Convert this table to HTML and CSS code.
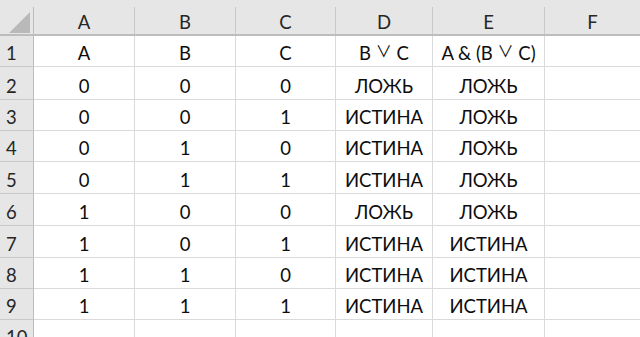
FILE: index.html
```html
<!DOCTYPE html>
<html>
<head>
<meta charset="utf-8">
<link rel="stylesheet" href="styles.css">
</head>
<body>
<div class="sheet">
  <div class="row head">
    <div class="corner"><svg width="34" height="28" viewBox="0 0 34 28"><polygon points="9,26 30,26 30,5" fill="#b9b9b9"/></svg></div>
    <div class="ch ca">A</div><div class="ch cb">B</div><div class="ch cc">C</div><div class="ch cd">D</div><div class="ch ce">E</div><div class="ch cf">F</div>
  </div>
  <div class="row r1"><div class="rh">1</div><div class="c ca">A</div><div class="c cb">B</div><div class="c cc">C</div><div class="c cd"><span class="t">B <span class="or">∨</span> C</span></div><div class="c ce"><span class="t">A &amp; (B <span class="or">∨</span> C)</span></div><div class="c cf"></div></div>
  <div class="row r2"><div class="rh">2</div><div class="c ca">0</div><div class="c cb">0</div><div class="c cc">0</div><div class="c cd">ЛОЖЬ</div><div class="c ce">ЛОЖЬ</div><div class="c cf"></div></div>
  <div class="row r3"><div class="rh">3</div><div class="c ca">0</div><div class="c cb">0</div><div class="c cc">1</div><div class="c cd">ИСТИНА</div><div class="c ce">ЛОЖЬ</div><div class="c cf"></div></div>
  <div class="row r4"><div class="rh">4</div><div class="c ca">0</div><div class="c cb">1</div><div class="c cc">0</div><div class="c cd">ИСТИНА</div><div class="c ce">ЛОЖЬ</div><div class="c cf"></div></div>
  <div class="row r5"><div class="rh">5</div><div class="c ca">0</div><div class="c cb">1</div><div class="c cc">1</div><div class="c cd">ИСТИНА</div><div class="c ce">ЛОЖЬ</div><div class="c cf"></div></div>
  <div class="row r6"><div class="rh">6</div><div class="c ca">1</div><div class="c cb">0</div><div class="c cc">0</div><div class="c cd">ЛОЖЬ</div><div class="c ce">ЛОЖЬ</div><div class="c cf"></div></div>
  <div class="row r7"><div class="rh">7</div><div class="c ca">1</div><div class="c cb">0</div><div class="c cc">1</div><div class="c cd">ИСТИНА</div><div class="c ce">ИСТИНА</div><div class="c cf"></div></div>
  <div class="row r8"><div class="rh">8</div><div class="c ca">1</div><div class="c cb">1</div><div class="c cc">0</div><div class="c cd">ИСТИНА</div><div class="c ce">ИСТИНА</div><div class="c cf"></div></div>
  <div class="row r9"><div class="rh">9</div><div class="c ca">1</div><div class="c cb">1</div><div class="c cc">1</div><div class="c cd">ИСТИНА</div><div class="c ce">ИСТИНА</div><div class="c cf"></div></div>
  <div class="row r10"><div class="rh">10</div><div class="c ca"></div><div class="c cb"></div><div class="c cc"></div><div class="c cd"></div><div class="c ce"></div><div class="c cf"></div></div>
</div>
</body>
</html>
```
FILE: styles.css
```css
html, body {
  margin: 0;
  padding: 0;
  background: #ffffff;
  overflow: hidden;
}
.sheet {
  width: 640px;
  height: 337px;
  overflow: hidden;
  font-family: Lato, "Open Sans", sans-serif;
  font-size: 18.5px;
  color: #0d0d0d;
}
.row {
  display: flex;
  box-sizing: border-box;
}
.head {
  height: 36px;
  padding-top: 7px;
  background: #e6e6e6;
  border-bottom: 2px solid #bdbdbd;
}
.corner {
  width: 34px;
  flex: none;
  box-sizing: border-box;
  border-right: 1px solid #bcbcbc;
  height: 27px;
}
.corner svg { display: block; }
.ch {
  flex: none;
  box-sizing: border-box;
  border-right: 1px solid #c9c9c9;
  display: flex;
  align-items: flex-end;
  justify-content: center;
  padding-bottom: 1px;
  color: #262626;
}
.ca { width: 101px; }
.cb { width: 101px; }
.cc { width: 100px; }
.cd { width: 97px; }
.ce { width: 112px; }
.cf { flex: 1; border-right: none; }
.rh {
  width: 34px;
  flex: none;
  box-sizing: border-box;
  background: #e6e6e6;
  border-right: 1px solid #bcbcbc;
  border-bottom: 1px solid #c9c9c9;
  display: flex;
  align-items: flex-end;
  padding-left: 6px;
  padding-bottom: 2px;
  color: #262626;
}
.c {
  flex: none;
  box-sizing: border-box;
  border-right: 1px solid #dadada;
  border-bottom: 1px solid #dadada;
  display: flex;
  align-items: flex-end;
  justify-content: center;
  padding-bottom: 2px;
  white-space: pre;
  line-height: 22px;
}
.t {
  display: block;
  line-height: 22px;
  height: 22px;
}
.or {
  font-family: "Noto Sans CJK JP", sans-serif;
  font-size: 16px;
  line-height: 1;
  vertical-align: 3px;
}
.c.cf { flex: 1; border-right: none; }
.r1 { height: 31px; }
.r2 { height: 33px; }
.r3 { height: 31px; }
.r4 { height: 31px; }
.r5 { height: 32px; }
.r6 { height: 32px; }
.r7 { height: 32px; }
.r8 { height: 31px; }
.r9 { height: 31px; }
.r10 { height: 31px; }
.r10 .rh, .r10 .c { padding-bottom: 0; align-items: flex-start; padding-top: 6px; }
```
